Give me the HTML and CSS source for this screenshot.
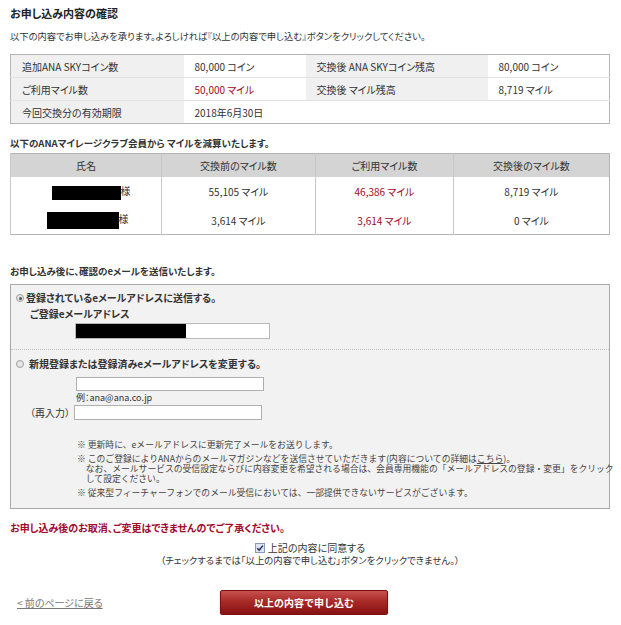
FILE: index.html
```html
<!DOCTYPE html>
<html lang="ja">
<head>
<meta charset="utf-8">
<title>お申し込み内容の確認</title>
<link rel="stylesheet" href="styles.css">
</head>
<body>
<div class="page">
  <h1 class="title">お申し込み内容の確認</h1>
  <p class="intro">以下の内容でお申し込みを承ります。よろしければ『以上の内容で申し込む』ボタンをクリックしてください。</p>

  <table class="summary">
    <colgroup><col class="c1"><col class="c2"><col class="c3"><col class="c4"></colgroup>
    <tr>
      <th>追加ANA SKYコイン数</th><td>80,000 コイン</td>
      <th>交換後 ANA SKYコイン残高</th><td>80,000 コイン</td>
    </tr>
    <tr>
      <th>ご利用マイル数</th><td class="red">50,000 マイル</td>
      <th>交換後 マイル残高</th><td>8,719 マイル</td>
    </tr>
    <tr class="last">
      <th>今回交換分の有効期限</th><td colspan="3">2018年6月30日</td>
    </tr>
  </table>

  <p class="subhead">以下のANAマイレージクラブ会員から マイルを減算いたします。</p>
  <table class="members">
    <colgroup><col class="m1"><col class="m2"><col class="m3"><col class="m4"></colgroup>
    <tr>
      <th>氏名</th><th>交換前のマイル数</th><th>ご利用マイル数</th><th>交換後のマイル数</th>
    </tr>
    <tr class="r1">
      <td><span class="mask mask1"></span>様</td><td>55,105 マイル</td><td class="red">46,386 マイル</td><td>8,719 マイル</td>
    </tr>
    <tr class="r2">
      <td><span class="mask mask2"></span>様</td><td>3,614 マイル</td><td class="red">3,614 マイル</td><td>0 マイル</td>
    </tr>
  </table>

  <p class="subhead mail-head">お申し込み後に、確認のeメールを送信いたします。</p>
  <div class="mailbox">
    <div class="opt opt1">
      <label class="radio-line"><span class="radio on"></span>登録されているeメールアドレスに送信する。</label>
      <div class="reg-label">ご登録eメールアドレス</div>
      <div class="reg-field"><span class="mask mask3"></span></div>
    </div>
    <div class="opt opt2">
      <label class="radio-line"><span class="radio"></span>新規登録または登録済みeメールアドレスを変更する。</label>
      <div class="field-row"><span class="field-label"></span><span class="input in1"></span></div>
      <div class="example">例：ana@ana.co.jp</div>
      <div class="field-row re"><span class="field-label">（再入力）</span><span class="input in2"></span></div>
      <ul class="notes">
        <li>※ 更新時に、eメールアドレスに更新完了メールをお送りします。</li>
        <li>※ このご登録によりANAからのメールマガジンなどを送信させていただきます(内容についての詳細は<a href="#">こちら</a>)。<br>　なお、メールサービスの受信設定ならびに内容変更を希望される場合は、会員専用機能の「メールアドレスの登録・変更」をクリック<br>　して設定ください。</li>
        <li>※ 従来型フィーチャーフォンでのメール受信においては、一部提供できないサービスがございます。</li>
      </ul>
    </div>
  </div>

  <p class="warning">お申し込み後のお取消、ご変更はできませんのでご了承ください。</p>

  <div class="agree">
    <label class="agree-line"><span class="check"><svg viewBox="0 0 10 10" width="8" height="8"><path d="M1.5 5.2 L4 7.6 L8.6 2" fill="none" stroke="#223355" stroke-width="1.8"/></svg></span>上記の内容に同意する</label>
    <div class="agree-note">（チェックするまでは「以上の内容で申し込む」ボタンをクリックできません。）</div>
  </div>

  <div class="actions">
    <a class="back" href="#">&lt; 前のページに戻る</a>
    <button class="submit" type="button">以上の内容で申し込む</button>
  </div>
</div>
</body>
</html>
```
FILE: styles.css
```css
* { box-sizing: border-box; }
body {
  margin: 0;
  background: #fff;
  color: #333;
  font-family: "Noto Sans CJK JP", "Liberation Sans", sans-serif;
  font-size: 10px;
  font-feature-settings: "palt";
}
.page { padding: 5px 11px 0 10px; }
.title { font-size: 11px; font-weight: bold; margin: 0; line-height: 16px; color: #222; }
.intro { margin: 8px 0 0; line-height: 14px; font-size: 9.3px; }

table { border-collapse: collapse; width: 100%; table-layout: fixed; }
.summary { margin-top: 11px; border: 1px solid #b4b4b4; }
.summary .c1 { width: 173px; }
.summary .c2 { width: 122px; }
.summary .c3 { width: 182px; }
.summary th, .summary td {
  height: 23px; padding: 0 0 0 11px; text-align: left; font-weight: normal;
  border-bottom: 1px solid #e2e2e2;
}
.summary th { background: #f0f0f0; color: #333; }
.summary tr.last th, .summary tr.last td { border-bottom: 0; }
.red { color: #a1082a; }

.subhead { margin: 12px 0 0; line-height: 14px; font-weight: bold; color: #333; font-size: 9.5px; }
.members { margin-top: 3px; border: 1px solid #b4b4b4; }
.members .m1 { width: 151px; }
.members .m2 { width: 154px; }
.members .m3 { width: 138px; }
.members th, .members td { text-align: center; border-left: 1px solid #c8c8c8; }
.members th { background: #d4d4d4; font-weight: normal; height: 23px; color: #333; }
.members .r1 td { height: 30px; }
.members .r2 td { height: 28px; }
.mask { display: inline-block; background: #000; vertical-align: middle; }
.mask1 { width: 69px; height: 14px; margin-left: 10px; }
.mask2 { width: 72px; height: 17px; margin-left: 3px; }

.mail-head { margin-top: 29px; }
.mailbox { margin-top: 6px; border: 1px solid #a8a8a8; background: #f2f2f2; }
.opt1 { padding: 6px 0 10px 5px; border-bottom: 1px dotted #c4c4c4; }
.opt2 { padding: 7px 0 10px 5px; }
.radio-line { display: flex; align-items: center; line-height: 14px; font-weight: bold; color: #333; }
.radio {
  width: 8px; height: 8px; border-radius: 50%; border: 1px solid #a0a0a0;
  background: #e6e6e6; margin-right: 2px; flex: none; position: relative;
}
.radio.on::after {
  content: ""; position: absolute; left: 1.5px; top: 1.5px; width: 3px; height: 3px;
  border-radius: 50%; background: #555;
}
.opt2 .radio { margin-right: 5px; }
.reg-label { margin: 2px 0 0 14px; line-height: 14px; font-weight: bold; }
.reg-field {
  margin: 2px 0 0 59px; width: 195px; height: 16px; background: #fff;
  border: 1px solid #b8b8b8; display: flex;
}
.mask3 { width: 110px; height: 14px; }
.field-row { display: flex; align-items: center; margin-top: 6px; }
.field-label { width: 58px; padding-left: 14px; flex: none; }
.input { display: block; height: 14px; background: #fff; border: 1px solid #b0b0b0; }
.in1 { width: 188px; margin-left: 2px; }
.re { margin-top: 1px; }
.re .field-label { width: 58px; }
.in2 { width: 188px; height: 15px; }
.example { margin: 1px 0 0 60px; line-height: 12px; font-size: 9px; }
.notes {
  list-style: none; margin: 20px 0 0 61px; padding: 0; font-size: 8.8px; color: #444;
  font-feature-settings: normal; white-space: nowrap;
}
.notes li { line-height: 10px; margin-bottom: 4px; }
.notes li:last-child { margin-bottom: 0; }
.notes a { color: #444; }

.warning { margin: 12px 0 0; color: #a1082a; font-weight: bold; line-height: 14px; }

.agree { margin-top: 7px; text-align: center; line-height: 12px; }
.agree-line { display: inline-flex; align-items: center; }
.check {
  display: inline-flex; align-items: center; justify-content: center;
  width: 10px; height: 10px; border: 1px solid #8a99b8; background: #dde5f3; margin-right: 3px;
}
.agree-note { font-size: 9.4px; }

.actions { display: flex; align-items: center; margin-top: 24px; }
.back { width: 210px; padding-left: 7px; color: #777; font-size: 10px; }
.submit {
  width: 168px; height: 25px; border: 1px solid #7a1212; border-radius: 2px;
  background: linear-gradient(#c8504e 0%, #a82a28 45%, #861212 100%);
  color: #fff; font-family: inherit; font-size: 10px; font-weight: bold;
  box-shadow: 0 1px 2px rgba(0,0,0,0.3); padding: 0;
}
```
